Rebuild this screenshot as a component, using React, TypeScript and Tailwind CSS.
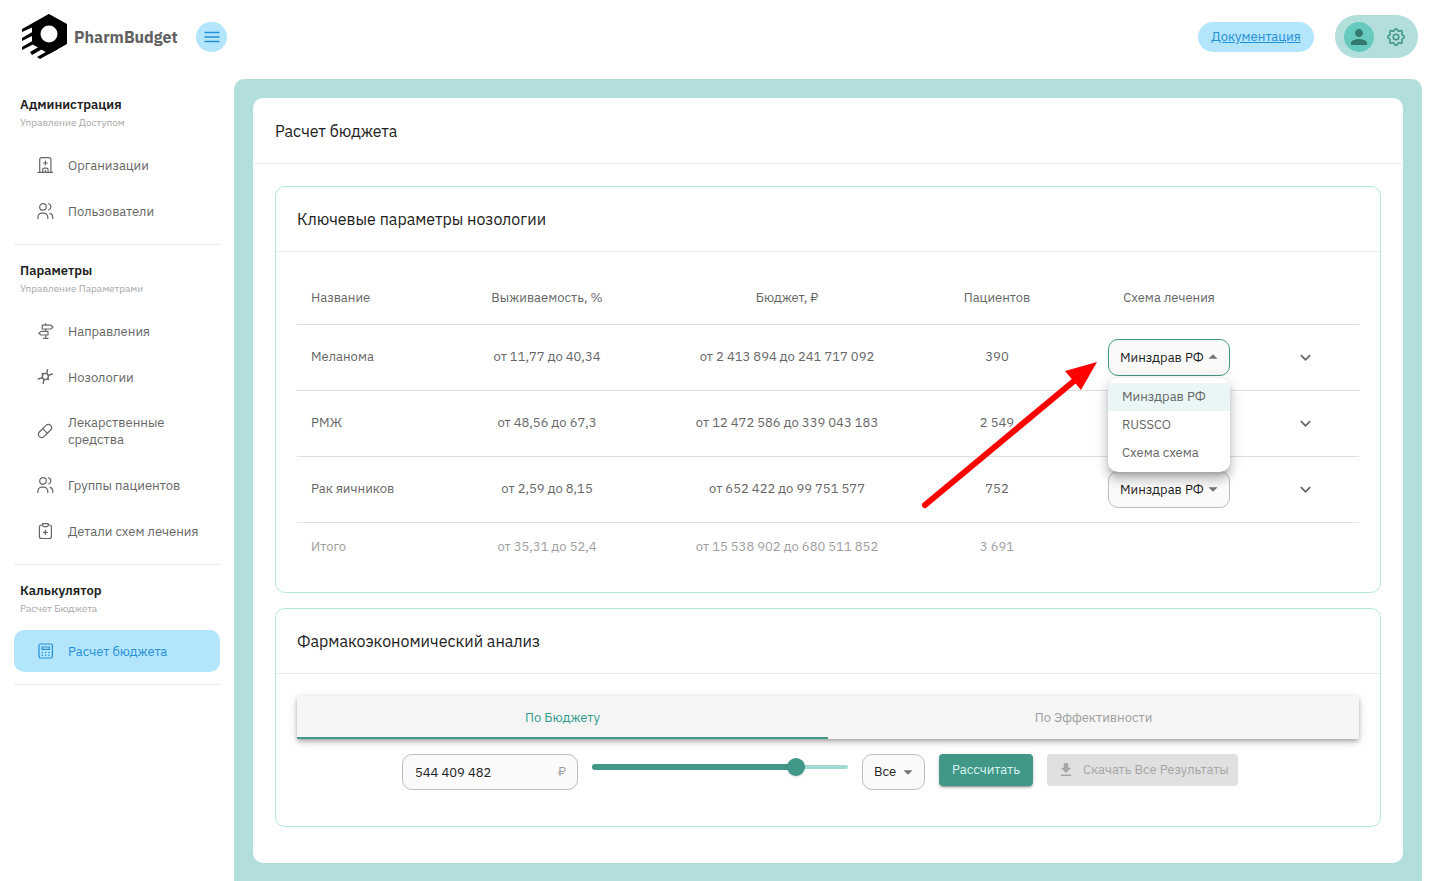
import { useState, type ReactNode } from 'react';
import { MdArrowDropDown, MdArrowDropUp, MdFileDownload, MdKeyboardArrowDown, MdPerson } from 'react-icons/md';
import { TbSettings } from 'react-icons/tb';
import { Pill } from 'lucide-react';
import clsx from 'clsx';

const SCHEMES = ['Минздрав РФ', 'RUSSCO', 'Схема схема'];

const ROWS = [
  { name: 'Меланома', survival: 'от 11,77 до 40,34', budget: 'от 2 413 894 до 241 717 092', patients: '390' },
  { name: 'РМЖ', survival: 'от 48,56 до 67,3', budget: 'от 12 472 586 до 339 043 183', patients: '2 549' },
  { name: 'Рак яичников', survival: 'от 2,59 до 8,15', budget: 'от 652 422 до 99 751 577', patients: '752' },
];

const MIN_BUDGET = 15538902;
const MAX_BUDGET = 680511852;

// ── icons ──────────────────────────────────────────────────────────────────

function LineIcon({ children }: { children: ReactNode }) {
  return (
    <svg viewBox="0 0 16 16" className="size-4 shrink-0 overflow-visible" fill="none" stroke="currentColor" strokeWidth="1.2" strokeLinecap="round" strokeLinejoin="round" aria-hidden="true">
      {children}
    </svg>
  );
}

function HospitalIcon() {
  return (
    <LineIcon>
      <path d="M1 15.4h14.6M2.7 15.4V2.6a2 2 0 0 1 2-2h7.2a2 2 0 0 1 2 2v12.8M8.4 4v4M6.4 6h4M5.7 15.4v-2.7a1.6 1.6 0 0 1 1.6-1.6h2.2a1.6 1.6 0 0 1 1.6 1.6v2.7M8.4 13.4v2" />
    </LineIcon>
  );
}

function UsersIcon() {
  return (
    <LineIcon>
      <circle cx="6" cy="3.9" r="3.3" />
      <path d="M.9 15.6v-1.4a4 4 0 0 1 4-4h1.9a4 4 0 0 1 4 4v1.4M11.6.7a3.3 3.3 0 0 1 0 6.3M13 10.4c1.7.5 2.7 1.9 2.7 3.6v1.6" />
    </LineIcon>
  );
}

function SignpostIcon() {
  return (
    <LineIcon>
      <path d="M8.7.6v1.6M8.7 6v2.4M8.7 12v3.3M6.4 15.3h4.6M5.2 2.2h8.6L16 4.1 13.8 6H5.2zM11 8.4H4L1.9 10.2 4 12h7z" />
    </LineIcon>
  );
}

function NodeIcon() {
  return (
    <LineIcon>
      <circle cx="8.3" cy="7.5" r="3.1" strokeWidth="1.4" />
      <path d="M10.5.8 9.8 4.6M15.3 5l-4 1.300M1.400 10l4-1.300M6.200 14.300 7 10.400M5.200 4.600l1 .800M11.500 10.500l-1-.900" strokeWidth="1.4" />
    </LineIcon>
  );
}

function ClipboardIcon() {
  return (
    <LineIcon>
      <path d="M5.6 2H4.4a2 2 0 0 0-2 2v9.5a2 2 0 0 0 2 2h8a2 2 0 0 0 2-2V4a2 2 0 0 0-2-2h-1.200M8.4 7.3v4M6.4 9.3h4M5.6.7h5.6v1.500a1.4 1.4 0 0 1-1.4 1.4H7a1.4 1.4 0 0 1-1.4-1.4z" />
    </LineIcon>
  );
}

function CalculatorIcon() {
  return (
    <LineIcon>
      <rect x="2" y="1" width="13.4" height="14" rx="1.5" />
      <path d="M5 4h7.4v2.4H5z" />
      <path d="M5.3 9.4h.1M8.6 9.4h.1M11.9 9.4h.1M5.3 12.2h.1M8.6 12.2h.1M11.9 12.2h.1" strokeWidth="1.5" />
    </LineIcon>
  );
}

function Logo() {
  return (
    <svg viewBox="0 0 45 45" className="size-[45px]" aria-hidden="true">
      <path d="M27 0 45 10v20L27 40 10 30V10z" />
      <path d="M0 15 27 0v6L0 18zM0 24l12-7v4L0 27zM0 33l12-7v4L0 36zM8 38l12-7 4 2L10 41zM15 43l14-8h7L18 45z" />
      <circle cx="27" cy="20" r="8.5" fill="#fff" />
    </svg>
  );
}

// ── sidebar ────────────────────────────────────────────────────────────────

const NAV = [
  {
    title: 'Администрация',
    sub: 'Управление Доступом',
    items: [
      { label: 'Организации', icon: <HospitalIcon /> },
      { label: 'Пользователи', icon: <UsersIcon /> },
    ],
  },
  {
    title: 'Параметры',
    sub: 'Управление Параметрами',
    items: [
      { label: 'Направления', icon: <SignpostIcon /> },
      { label: 'Нозологии', icon: <NodeIcon /> },
      { label: 'Лекарственные средства', icon: <Pill className="size-4 shrink-0 overflow-visible" strokeWidth={1.8} /> },
      { label: 'Группы пациентов', icon: <UsersIcon /> },
      { label: 'Детали схем лечения', icon: <ClipboardIcon /> },
    ],
  },
  {
    title: 'Калькулятор',
    sub: 'Расчет Бюджета',
    items: [{ label: 'Расчет бюджета', icon: <CalculatorIcon />, active: true }],
  },
];

function Sidebar() {
  return (
    <nav className="w-[234px] shrink-0 px-3.5">
      {NAV.map(section => (
        <section key={section.title} className="border-b border-[#ebebeb] pt-[17px] pb-3">
          <h2 className="px-1.5 text-[13px] leading-[18px] font-semibold text-[#212121]">{section.title}</h2>
          <p className="px-1.5 text-[10px] leading-[17px] text-[#a8a8a8]">{section.sub}</p>
          <ul className="mt-[13px] flex flex-col gap-1">
            {section.items.map(item => (
              <li key={item.label}>
                <a
                  href="#"
                  className={clsx(
                    'flex min-h-[42px] items-center gap-[15px] rounded-[10px] py-3 pr-4 pl-[23px] text-[13px] leading-[17px]',
                    'active' in item ? 'bg-[#b3e5fc] text-[#2490d6]' : 'text-[#666]',
                  )}
                >
                  {item.icon}
                  <span>{item.label}</span>
                </a>
              </li>
            ))}
          </ul>
        </section>
      ))}
    </nav>
  );
}

// ── controls ───────────────────────────────────────────────────────────────

function SchemeSelect({ name, open, onToggle }: { name: string; open: boolean; onToggle: () => void }) {
  const [value, setValue] = useState(SCHEMES[0]);
  return (
    <div className="relative mx-auto w-[122px] text-left">
      <select
        aria-label={`Схема лечения: ${name}`}
        value={value}
        onChange={e => setValue(e.target.value)}
        onMouseDown={e => { e.preventDefault(); onToggle(); }}
        className={clsx(
          'block h-[37px] w-full appearance-none rounded-[10px] border bg-[#fafafa] pt-px pl-[11px] text-[13px] text-[#212121] outline-none',
          open ? 'border-[#429888]' : 'border-[#bdbdbd]',
        )}
      >
        {SCHEMES.map(s => <option key={s}>{s}</option>)}
      </select>
      <span className="pointer-events-none absolute inset-y-0 right-1.5 flex items-center text-[#757575]">
        {open ? <MdArrowDropUp size={22} /> : <MdArrowDropDown size={22} />}
      </span>
      {open && (
        <ul className="absolute inset-x-0 top-full z-10 mt-0.5 rounded-[10px] bg-white py-[5px] shadow-[0_5px_5px_-3px_rgba(0,0,0,0.2),0_8px_10px_1px_rgba(0,0,0,0.14),0_3px_14px_2px_rgba(0,0,0,0.12)]">
          {SCHEMES.map(s => (
            <li key={s}>
              <button
                type="button"
                onClick={() => { setValue(s); onToggle(); }}
                className={clsx('block h-7 w-full px-3.5 text-left text-[13px] text-[#666]', s === value && 'bg-[#e9f6f5]')}
              >
                {s}
              </button>
            </li>
          ))}
        </ul>
      )}
    </div>
  );
}

function Pointer() {
  return (
    <svg viewBox="0 0 180 150" className="pointer-events-none absolute top-5 right-full z-20 mr-2 h-[150px] w-[180px]" aria-hidden="true">
      <path d="M5 146 160 17" stroke="#f00" strokeWidth="6" strokeLinecap="round" />
      <path d="M177 3 145 12 161 31z" fill="#f00" />
    </svg>
  );
}

function Panel({ title, children }: { title: string; children: ReactNode }) {
  return (
    <section className="rounded-[10px] border border-[#b2e6e0]">
      <h2 className="border-b border-[#ebebeb] px-[21px] py-5 text-[16px] leading-6 text-[#212121]">{title}</h2>
      {children}
    </section>
  );
}

function NosologyTable() {
  const [openRow, setOpenRow] = useState<string | null>('Меланома');
  return (
    <div className="px-[21px] py-[21px]">
      <table className="w-full table-fixed text-center text-[13px] leading-5 text-[#666]">
        <colgroup>
          <col className="w-[130px]" />
          <col className="w-[240px]" />
          <col className="w-[240px]" />
          <col className="w-[180px]" />
          <col className="w-[164px]" />
          <col className="w-[108px]" />
        </colgroup>
        <thead>
          <tr className="h-[51px] border-b border-[#e0e0e0]">
            <th scope="col" className="pl-3.5 text-left font-normal">Название</th>
            <th scope="col" className="font-normal">Выживаемость, %</th>
            <th scope="col" className="font-normal">Бюджет, ₽</th>
            <th scope="col" className="font-normal">Пациентов</th>
            <th scope="col" className="font-normal">Схема лечения</th>
            <td />
          </tr>
        </thead>
        <tbody>
          {ROWS.map(row => (
            <tr key={row.name} className="h-[66px] border-b border-[#e0e0e0]">
              <td className="pl-3.5 text-left">{row.name}</td>
              <td>{row.survival}</td>
              <td>{row.budget}</td>
              <td>{row.patients}</td>
              <td>
                <div className="relative mx-auto w-[122px]">
                  <SchemeSelect
                    name={row.name}
                    open={openRow === row.name}
                    onToggle={() => setOpenRow(openRow === row.name ? null : row.name)}
                  />
                  {row.name === 'Меланома' && <Pointer />}
                </div>
              </td>
              <td>
                <button type="button" aria-label={`Подробнее: ${row.name}`} className="align-middle text-[#666]">
                  <MdKeyboardArrowDown size={21} />
                </button>
              </td>
            </tr>
          ))}
          <tr className="h-[49px] text-[#9e9e9e]">
            <td className="pl-3.5 text-left">Итого</td>
            <td>от 35,31 до 52,4</td>
            <td>от 15 538 902 до 680 511 852</td>
            <td>3 691</td>
            <td />
            <td />
          </tr>
        </tbody>
      </table>
    </div>
  );
}

function Analysis() {
  const [tab, setTab] = useState('По Бюджету');
  const [budget, setBudget] = useState(544409482);
  const share = ((budget - MIN_BUDGET) / (MAX_BUDGET - MIN_BUDGET)) * 100;

  return (
    <div className="px-[21px] pt-[22px] pb-9">
      <div role="tablist" className="grid grid-cols-2 bg-[#f5f5f5] shadow-[0_2px_4px_-1px_rgba(0,0,0,0.2),0_4px_5px_0_rgba(0,0,0,0.14),0_1px_10px_0_rgba(0,0,0,0.12)]">
        {['По Бюджету', 'По Эффективности'].map(t => (
          <button
            key={t}
            type="button"
            role="tab"
            aria-selected={tab === t}
            onClick={() => setTab(t)}
            className={clsx(
              'h-[43px] border-b-2 pt-0.5 text-[13px]',
              tab === t ? 'border-[#429888] text-[#2f9c8c]' : 'border-transparent text-[#9e9e9e]',
            )}
          >
            {t}
          </button>
        ))}
      </div>

      <div className="mt-[15px] flex items-start justify-center gap-3.5 pr-4">
        <div className="relative w-44">
          <input
            aria-label="Бюджет"
            value={String(budget).replace(/\B(?=(\d{3})+$)/g, ' ')}
            onChange={e => setBudget(Number(e.target.value.replace(/\D/g, '')))}
            className="block h-9 w-full rounded-[10px] border border-[#bdbdbd] bg-[#fafafa] px-3 text-[13px] text-[#212121] outline-none"
          />
          <span className="pointer-events-none absolute inset-y-0 right-3 flex items-center text-[13px] text-[#9e9e9e]">₽</span>
        </div>

        <div className="relative flex h-[26px] w-64 items-center">
          <div className="h-1 w-full rounded-full bg-[#9fdad4]" />
          <div className="absolute left-0 h-1.5 rounded-full bg-[#429888]" style={{ width: `${share}%` }} />
          <input
            type="range"
            aria-label="Размер бюджета"
            min={MIN_BUDGET}
            max={MAX_BUDGET}
            value={budget}
            onChange={e => setBudget(Number(e.target.value))}
            className="absolute -inset-x-[9px] h-[18px] appearance-none bg-transparent [&::-webkit-slider-thumb]:size-[18px] [&::-webkit-slider-thumb]:appearance-none [&::-webkit-slider-thumb]:rounded-full [&::-webkit-slider-thumb]:bg-[#429888] [&::-webkit-slider-thumb]:shadow"
          />
        </div>

        <div className="relative w-[63px]">
          <select aria-label="Нозология" className="block h-9 w-full appearance-none rounded-[10px] border border-[#bdbdbd] bg-[#fafafa] pl-[11px] text-[13px] text-[#212121] outline-none">
            <option>Все</option>
          </select>
          <span className="pointer-events-none absolute inset-y-0 right-1.5 flex items-center text-[#757575]">
            <MdArrowDropDown size={22} />
          </span>
        </div>

        <button type="button" className="h-8 w-[94px] rounded bg-[#429888] text-[13px] text-[#d9f5f0] shadow-[0_3px_1px_-2px_rgba(0,0,0,0.2),0_2px_2px_0_rgba(0,0,0,0.14),0_1px_5px_0_rgba(0,0,0,0.12)]">
          Рассчитать
        </button>
        <button type="button" disabled className="flex h-8 w-[191px] items-center gap-2 rounded bg-[#e0e0e0] pl-2.5 text-[13px] whitespace-nowrap text-[#a6a6a6]">
          <MdFileDownload size={18} className="shrink-0" />
          Скачать Все Результаты
        </button>
      </div>
    </div>
  );
}

export default function App() {
  return (
    <div className="flex min-h-screen flex-col bg-white font-['IBM_Plex_Sans','Noto_Sans',sans-serif]">
      <header className="flex h-[79px] items-start pt-[15px] pr-[22px] pl-[22px]">
        <div className="flex h-[43px] items-center">
          <Logo />
          <span className="ml-[7px] w-[122px] text-[16px] font-bold text-[#616161]">PharmBudget</span>
          <button type="button" aria-label="Меню" className="flex h-[30px] w-[31px] items-center justify-center rounded-full bg-[#b3e5fc] text-[#2490d6]">
            <svg viewBox="0 0 16 12" className="h-3 w-4" stroke="currentColor" strokeWidth="1.3" strokeLinecap="round" aria-hidden="true">
              <path d="M1 1.5h14M1 6h14M1 10.5h14" />
            </svg>
          </button>
        </div>
        <div className="ml-auto flex h-[43px] items-center gap-[21px]">
          <a href="#" className="flex h-[30px] w-[116px] items-center justify-center rounded-full bg-[#b3e5fc] pt-px text-[13px] text-[#2490d6] underline">
            Документация
          </a>
          <div className="flex h-[43px] w-[83px] items-center rounded-full bg-[#b2dfdb] pl-[9px]">
            <button type="button" aria-label="Профиль" className="flex size-[30px] items-center justify-center rounded-full bg-[#66cabf] text-[#337a6d]">
              <MdPerson size={24} />
            </button>
            <button type="button" aria-label="Настройки" className="ml-[11px] text-[#429888]">
              <TbSettings size={22} strokeWidth={1.8} />
            </button>
          </div>
        </div>
      </header>

      <div className="flex flex-1">
        <Sidebar />
        <main className="mr-[18px] min-w-0 flex-1 rounded-t-[10px] bg-[#b2dfdb] px-[19px] pt-[19px] pb-[18px]">
          <div className="rounded-[10px] bg-white">
            <h1 className="border-b border-[#ebebeb] px-[22px] pt-[21px] pb-5 text-[16px] leading-6 text-[#212121]">Расчет бюджета</h1>
            <div className="flex flex-col gap-[15px] px-[22px] pt-[22px] pb-9">
              <Panel title="Ключевые параметры нозологии">
                <NosologyTable />
              </Panel>
              <Panel title="Фармакоэкономический анализ">
                <Analysis />
              </Panel>
            </div>
          </div>
        </main>
      </div>
    </div>
  );
}
